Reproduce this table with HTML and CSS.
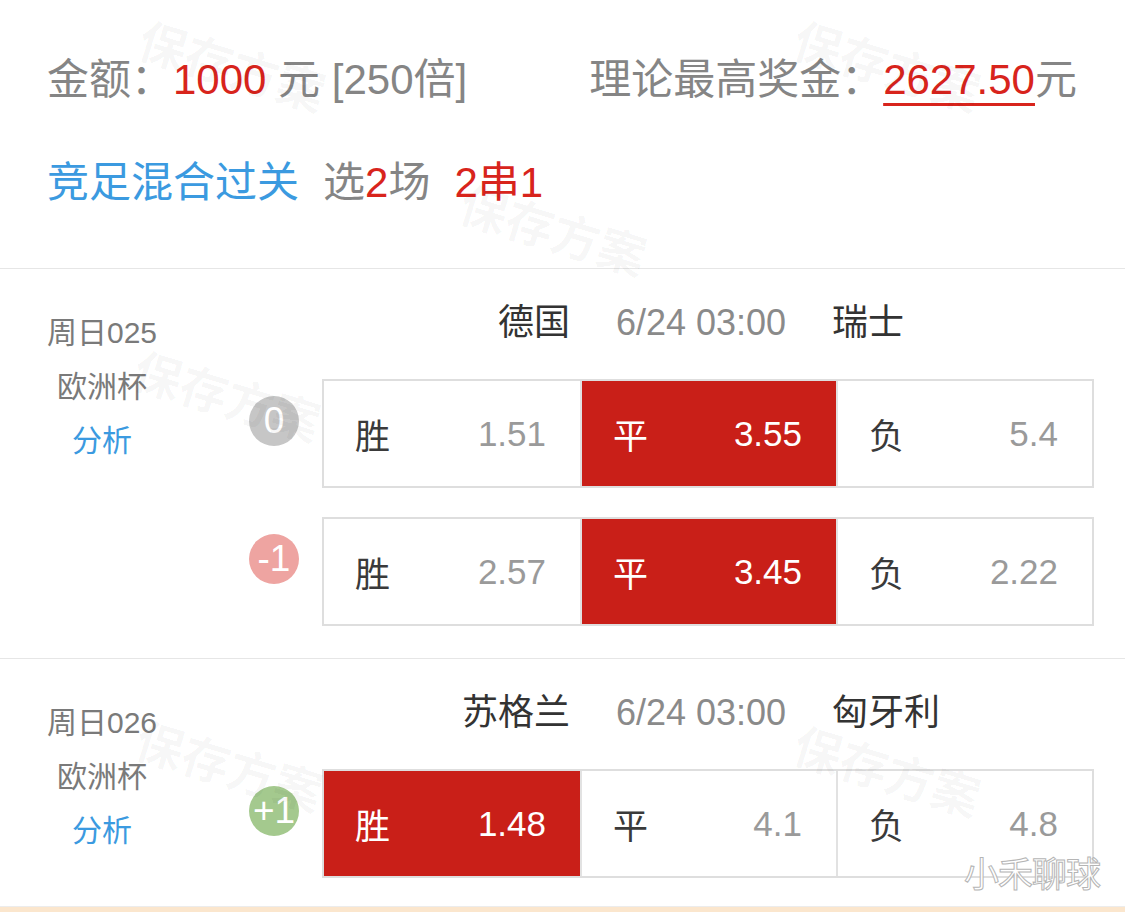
FILE: index.html
```html
<!DOCTYPE html>
<html lang="zh-CN">
    <head>
        <meta charset="utf-8">
        <title>竞足混合过关</title>
        <link rel="stylesheet" href="styles.css">
    </head>
    <body>
        <div class="page">
            <div class="summary">
                <div class="summary-row">
                    <div class="amount">金额：<span class="red">1000</span> 元 [250倍]</div>
                    <div class="prize">理论最高奖金：<span class="red prize-num">2627.50</span>元</div>
                </div>
                <div class="summary-row play">
                    <span class="blue">竞足混合过关</span>
                    <span class="pick">选<span class="red">2</span>场</span>
                    <span class="red pick">2串1</span>
                </div>
            </div>

            <div class="match">
                <div class="info">
                    <div>周日025</div>
                    <div class="league">欧洲杯</div>
                    <div class="blue">分析</div>
                </div>
                <div class="body">
                    <div class="teams">
                        <span class="home">德国</span>
                        <span class="time">6/24 03:00</span>
                        <span class="away">瑞士</span>
                    </div>
                    <div class="odds-row">
                        <span class="badge badge-zero">0</span>
                        <div class="odds">
                            <div class="cell"><span>胜</span><span class="num">1.51</span></div>
                            <div class="cell picked"><span>平</span><span class="num">3.55</span></div>
                            <div class="cell"><span>负</span><span class="num">5.4</span></div>
                        </div>
                    </div>
                    <div class="odds-row">
                        <span class="badge badge-minus">-1</span>
                        <div class="odds">
                            <div class="cell"><span>胜</span><span class="num">2.57</span></div>
                            <div class="cell picked"><span>平</span><span class="num">3.45</span></div>
                            <div class="cell"><span>负</span><span class="num">2.22</span></div>
                        </div>
                    </div>
                </div>
            </div>

            <div class="match last">
                <div class="info">
                    <div>周日026</div>
                    <div class="league">欧洲杯</div>
                    <div class="blue">分析</div>
                </div>
                <div class="body">
                    <div class="teams">
                        <span class="home">苏格兰</span>
                        <span class="time">6/24 03:00</span>
                        <span class="away">匈牙利</span>
                    </div>
                    <div class="odds-row">
                        <span class="badge badge-plus">+1</span>
                        <div class="odds">
                            <div class="cell picked"><span>胜</span><span class="num">1.48</span></div>
                            <div class="cell"><span>平</span><span class="num">4.1</span></div>
                            <div class="cell"><span>负</span><span class="num">4.8</span></div>
                        </div>
                    </div>
                </div>
            </div>

            <div class="footer"></div>

            <!-- watermarks over the screenshot -->
            <span class="wm wm-1">保存方案</span>
            <span class="wm wm-2">保存方案</span>
            <span class="wm wm-3">保存方案</span>
            <span class="wm wm-4">保存方案</span>
            <span class="wm wm-5">保存方案</span>
            <span class="wm wm-6">保存方案</span>
            <span class="sign">小禾聊球</span>
        </div>
    </body>
</html>
```

FILE: styles.css
```css
*{
    box-sizing: border-box;
}
body{
    margin: 0;
    background-color: #fff;
    font-family: "Liberation Sans", "Noto Sans CJK SC", sans-serif;
}
.page{
    position: relative;
    width: 1125px;
    height: 912px;
    overflow: hidden;
}
.red{
    color: #d8241c;
}
.blue{
    color: #3b9ae0;
}

/* top summary */
.summary{
    padding: 50px 48px 55px 47px;
    border-bottom: 1px solid #e6e6e6;
    font-size: 42px;
    color: #858585;
}
.summary-row{
    display: flex;
    justify-content: space-between;
    line-height: 60px;
    white-space: nowrap;
}
.summary-row.play{
    justify-content: flex-start;
    margin-top: 43px;
}
.prize-num{
    text-decoration: underline;
    text-decoration-thickness: 3px;
    text-underline-offset: 9px;
}
.pick{
    margin-left: 24px;
}

/* match blocks */
.match{
    display: flex;
    padding: 0 31px 32px 32px;
    border-bottom: 1px solid #e6e6e6;
}
.match.last{
    padding-bottom: 28px;
    border-bottom: none;
}
.info{
    width: 140px;
    padding-top: 37px;
    font-size: 30px;
    line-height: 54px;
    text-align: center;
    white-space: nowrap;
    color: #7a7a7a;
}
.body{
    flex: 1;
    margin-left: 77px;
    padding-top: 34px;
}
.teams{
    display: grid;
    grid-template-columns: 1fr auto 1fr;
    column-gap: 46px;
    padding: 0 14px 0 73px;
    font-size: 36px;
    line-height: 40px;
    color: #333;
    margin-bottom: 36px;
}
.home{
    text-align: right;
}
.time{
    color: #8a8a8a;
}
.odds-row{
    display: flex;
    align-items: flex-start;
    gap: 23px;
    margin-bottom: 29px;
}
.odds-row:last-child{
    margin-bottom: 0;
}
.badge{
    width: 50px;
    height: 50px;
    margin-top: 17px;
    border-radius: 50%;
    color: #fff;
    font-size: 37px;
    line-height: 50px;
    text-align: center;
}
.badge-zero{
    background-color: #c6c6c6;
}
.badge-minus{
    background-color: #eea4a1;
}
.badge-plus{
    background-color: #a4c98e;
}
.odds{
    flex: 1;
    display: grid;
    grid-template-columns: 1fr 1fr 1fr;
    height: 109px;
    border: 2px solid #dedede;
}
.cell{
    display: flex;
    justify-content: space-between;
    align-items: center;
    padding: 0 34px 0 31px;
    font-size: 35px;
    color: #3a3a3a;
    border-left: 2px solid #e2e2e2;
}
.cell:first-child{
    border-left: none;
}
.cell .num{
    color: #9a9a9a;
}
.cell.picked{
    background-color: #c91f18;
    color: #fff;
}
.cell.picked .num{
    color: #fff;
}
.footer{
    height: 10px;
    border-top: 1px solid #ececec;
    background-color: #fbe6cd;
}

/* faint watermarks */
.wm{
    position: absolute;
    font-family: "Noto Sans CJK SC", sans-serif;
    font-size: 48px;
    line-height: 1;
    font-weight: 700;
    color: rgba(0, 0, 0, 0.035);
    transform: rotate(17deg);
    white-space: nowrap;
    pointer-events: none;
}
.wm-1{ left: 137px; top: 40px; }
.wm-2{ left: 792px; top: 40px; }
.wm-3{ left: 458px; top: 204px; }
.wm-4{ left: 132px; top: 370px; }
.wm-5{ left: 134px; top: 740px; }
.wm-6{ left: 792px; top: 745px; }
.sign{
    position: absolute;
    left: 964px;
    top: 846px;
    font-family: "Noto Sans CJK SC", sans-serif;
    font-size: 35px;
    color: #fff;
    -webkit-text-stroke: 1px #b5b5b5;
    letter-spacing: -1px;
}
```
